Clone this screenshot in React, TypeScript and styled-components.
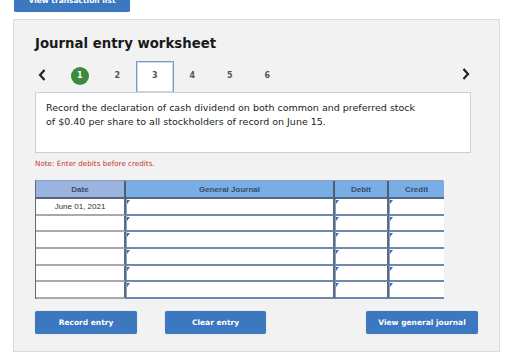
import React from "react";
import styled, { createGlobalStyle } from "styled-components";

const Global = createGlobalStyle`
  html, body { margin: 0; padding: 0; background: #ffffff; }
  body { font-family: "DejaVu Sans", Verdana, sans-serif; overflow: hidden; }
  * { box-sizing: border-box; }
`;

const Page = styled.div`
  width: 522px;
  height: 353px;
  overflow: hidden;
  display: flex;
  flex-direction: column;
`;

const BlueButton = styled.button<{ $w: number }>`
  width: ${(p) => p.$w}px;
  height: 23px;
  border: none;
  border-radius: 2px;
  background: #3b78bf;
  color: #ffffff;
  font-family: "DejaVu Sans", Verdana, sans-serif;
  font-weight: bold;
  font-size: 7.5px;
  padding: 0;
  box-shadow: 0 0 1px rgba(0,0,0,0.3);
  display: flex;
  align-items: center;
  justify-content: center;
`;

const TopButtonWrap = styled.div`
  margin-left: 14px;
  margin-top: -11px;
`;

const Panel = styled.div`
  margin-left: 13px;
  margin-top: 7px;
  width: 487px;
  height: 333px;
  background: #f2f2f2;
  border: 1px solid #dcdcdc;
  padding: 14px 0 0 21px;
  display: flex;
  flex-direction: column;
`;

const Title = styled.h1`
  margin: 0;
  font-family: "DejaVu Sans", Verdana, sans-serif;
  font-weight: bold;
  font-size: 13.3px;
  line-height: 20px;
  color: #1a1a1a;
`;

const NavRow = styled.div`
  margin-top: 7px;
  height: 31px;
  width: 444px;
  display: flex;
  align-items: center;
`;

const Chevron = styled.div`
  width: 26px;
  height: 31px;
  display: flex;
  align-items: center;
  padding-left: 3px;
  padding-bottom: 3px;
`;

const Steps = styled.div`
  display: flex;
  flex: 1;
  height: 31px;
`;

const Step = styled.div<{ $active?: boolean }>`
  width: 37.5px;
  height: 31px;
  display: flex;
  align-items: center;
  justify-content: center;
  padding-bottom: 3px;
  font-size: 8px;
  color: #555;
  font-weight: bold;
  border: ${(p) => (p.$active ? "1px solid #7a9cc6" : "1px solid transparent")};
  border-bottom: none;
  background: ${(p) => (p.$active ? "#ffffff" : "transparent")};
  box-shadow: ${(p) => (p.$active ? "inset 0 0 0 1px #c8d6ea" : "none")};
`;

const Done = styled.span`
  width: 18px;
  height: 18px;
  border-radius: 50%;
  background: #3f8a3c;
  color: #ffffff;
  font-size: 8px;
  font-weight: bold;
  display: flex;
  align-items: center;
  justify-content: center;
`;

const RightChevron = styled.div`
  width: 26px;
  height: 31px;
  display: flex;
  align-items: center;
  justify-content: center;
  padding-bottom: 5px;
`;

const Question = styled.div`
  width: 436px;
  height: 61px;
  background: #ffffff;
  border: 1px solid #cfcfcf;
  padding: 8px 12px 8px 10px;
  font-size: 9.5px;
  line-height: 14px;
  color: #222;
  white-space: nowrap;
  overflow: hidden;
`;

const Note = styled.div`
  margin-top: 6px;
  font-size: 7.2px;
  line-height: 10px;
  color: #c0392b;
`;

const Table = styled.div`
  margin-top: 11px;
  width: 408px;
  display: grid;
  grid-template-columns: 90px 209px 54px 55px;
  grid-template-rows: 18px repeat(6, 16.67px);
  border: 1px solid #5d6b80;
  border-top: 1px solid #8aa0c0;
  border-bottom: none;
`;

const HeadCell = styled.div<{ $bg: string; $last?: boolean }>`
  background: ${(p) => p.$bg};
  border-right: ${(p) => (p.$last ? "none" : "2px solid #4e5d72")};
  border-bottom: 2px solid #56667e;
  display: flex;
  align-items: center;
  justify-content: center;
  font-family: "Liberation Sans", Arial, sans-serif;
  font-weight: bold;
  font-size: 8px;
  color: #3c4a5e;
`;

const DateCell = styled.div`
  background: #ffffff;
  border-right: 2px solid #5d6b80;
  border-bottom: 2px solid #a9a9a9;
  display: flex;
  align-items: center;
  justify-content: center;
  font-family: "Liberation Sans", Arial, sans-serif;
  font-size: 8px;
  color: #333;
`;

const InputCell = styled.div<{ $last?: boolean }>`
  position: relative;
  background: #ffffff;
  border-right: ${(p) => (p.$last ? "none" : "2px solid #5d6b80")};
  border-bottom: 2px solid #6f88ad;
  box-shadow: inset 1px 0 0 #8fa3c0;
`;

const Tick = styled.span`
  position: absolute;
  left: 1px;
  top: 1px;
  width: 0;
  height: 0;
  border-top: 4px solid #2e6fc4;
  border-right: 3px solid transparent;
`;

const ButtonRow = styled.div`
  margin-top: 12px;
  width: 443px;
  display: flex;
  align-items: center;
`;

const Spacer = styled.div<{ $w?: number }>`
  width: ${(p) => (p.$w ? `${p.$w}px` : "auto")};
  flex: ${(p) => (p.$w ? "none" : "1")};
`;

const ChevronIcon = ({ dir }: { dir: "left" | "right" }) => (
  <svg width="8" height="12" viewBox="0 0 8 12">
    <path
      d={dir === "left" ? "M6.5 1 L2 6 L6.5 11" : "M1.5 1 L6 6 L1.5 11"}
      fill="none"
      stroke="#222"
      strokeWidth="2.2"
    />
  </svg>
);

export default function App() {
  const rows = [0, 1, 2, 3, 4, 5];
  return (
    <Page>
      <Global />
      <TopButtonWrap>
        <BlueButton $w={116}>View transaction list</BlueButton>
      </TopButtonWrap>
      <Panel>
        <Title>Journal entry worksheet</Title>
        <NavRow>
          <Chevron>
            <ChevronIcon dir="left" />
          </Chevron>
          <Steps>
            <Step>
              <Done>1</Done>
            </Step>
            <Step>2</Step>
            <Step $active>3</Step>
            <Step>4</Step>
            <Step>5</Step>
            <Step>6</Step>
          </Steps>
          <RightChevron>
            <ChevronIcon dir="right" />
          </RightChevron>
        </NavRow>
        <Question>
          Record the declaration of cash dividend on both common and preferred stock
          <br />
          of $0.40 per share to all stockholders of record on June 15.
        </Question>
        <Note>Note: Enter debits before credits.</Note>
        <Table>
          <HeadCell $bg="#9ab3df">Date</HeadCell>
          <HeadCell $bg="#79ade6">General Journal</HeadCell>
          <HeadCell $bg="#79ade6">Debit</HeadCell>
          <HeadCell $bg="#79ade6" $last>
            Credit
          </HeadCell>
          {rows.map((r) => (
            <React.Fragment key={r}>
              <DateCell>{r === 0 ? "June 01, 2021" : ""}</DateCell>
              <InputCell>
                <Tick />
              </InputCell>
              <InputCell>
                <Tick />
              </InputCell>
              <InputCell $last>
                <Tick />
              </InputCell>
            </React.Fragment>
          ))}
        </Table>
        <ButtonRow>
          <BlueButton $w={102}>Record entry</BlueButton>
          <Spacer $w={28} />
          <BlueButton $w={101}>Clear entry</BlueButton>
          <Spacer />
          <BlueButton $w={112}>View general journal</BlueButton>
        </ButtonRow>
      </Panel>
    </Page>
  );
}
